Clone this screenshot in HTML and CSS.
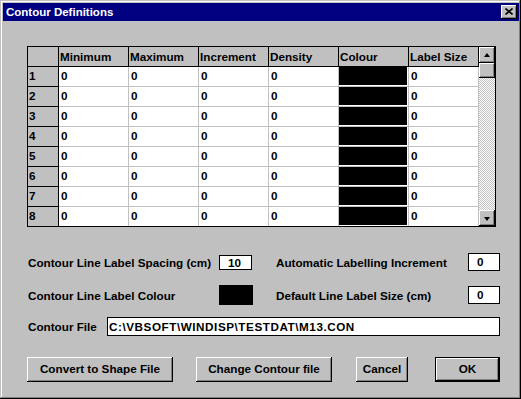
FILE: index.html
```html
<!DOCTYPE html>
<html lang="en">
<head>
    <meta charset="UTF-8">
    <title>Contour Definitions</title>
    <link rel="stylesheet" href="styles.css">
</head>
<body>
    <div class="win">
        <div class="title">
            <span>Contour Definitions</span>
            <div class="close">
                <svg width="8" height="7" viewBox="0 0 8 7"><path d="M0.5 0.5L7.5 6.5M7.5 0.5L0.5 6.5" stroke="#000" stroke-width="1.6" fill="none"/></svg>
            </div>
        </div>
        <div class="body">
            <div class="sheet">
                <div class="cells">
                    <div class="h"></div><div class="h">Minimum</div><div class="h">Maximum</div><div class="h">Increment</div><div class="h">Density</div><div class="h">Colour</div><div class="h">Label Size</div>
                    <div class="n">1</div><div class="c">0</div><div class="c">0</div><div class="c">0</div><div class="c">0</div><div class="c col"><i></i></div><div class="c">0</div>
                    <div class="n">2</div><div class="c">0</div><div class="c">0</div><div class="c">0</div><div class="c">0</div><div class="c col"><i></i></div><div class="c">0</div>
                    <div class="n">3</div><div class="c">0</div><div class="c">0</div><div class="c">0</div><div class="c">0</div><div class="c col"><i></i></div><div class="c">0</div>
                    <div class="n">4</div><div class="c">0</div><div class="c">0</div><div class="c">0</div><div class="c">0</div><div class="c col"><i></i></div><div class="c">0</div>
                    <div class="n">5</div><div class="c">0</div><div class="c">0</div><div class="c">0</div><div class="c">0</div><div class="c col"><i></i></div><div class="c">0</div>
                    <div class="n">6</div><div class="c">0</div><div class="c">0</div><div class="c">0</div><div class="c">0</div><div class="c col"><i></i></div><div class="c">0</div>
                    <div class="n">7</div><div class="c">0</div><div class="c">0</div><div class="c">0</div><div class="c">0</div><div class="c col"><i></i></div><div class="c">0</div>
                    <div class="n">8</div><div class="c">0</div><div class="c">0</div><div class="c">0</div><div class="c">0</div><div class="c col"><i></i></div><div class="c">0</div>
                </div>
                <div class="vscroll">
                    <div class="sbtn"><span class="up"></span></div>
                    <div class="thumb"></div>
                    <div class="track"></div>
                    <div class="sbtn"><span class="down"></span></div>
                </div>
            </div>

            <div class="opts">
                <div class="lbl">Contour Line Label Spacing (cm)</div>
                <div class="box small">10</div>
                <div class="lbl">Automatic Labelling Increment</div>
                <div class="box">0</div>
                <div class="lbl">Contour Line Label Colour</div>
                <div class="swatch"></div>
                <div class="lbl">Default Line Label Size (cm)</div>
                <div class="box">0</div>
            </div>

            <div class="file">
                <div class="lbl">Contour File</div>
                <div class="box path">C:\VBSOFT\WINDISP\TESTDAT\M13.CON</div>
            </div>

            <div class="btns">
                <div class="btn b-shape">Convert to Shape File</div>
                <div class="btn b-change">Change Contour file</div>
                <div class="btn b-cancel">Cancel</div>
                <div class="btn b-ok">OK</div>
            </div>
        </div>
    </div>
</body>
</html>
```

FILE: styles.css
```css
*{margin:0;padding:0;box-sizing:border-box;}
body{
    background:#c0c0c0;
    font-family:"Liberation Sans",Arial,sans-serif;
    font-size:11.7px;
    font-weight:bold;
    color:#000;
}
.win{
    width:521px;
    height:399px;
    padding:3px 2px 3px 3px;
    background:#c0c0c0;
    box-shadow: inset -1px -1px #000, inset 1px 1px #c0c0c0, inset -2px -2px #808080, inset 2px 2px #fff;
    display:flex;
    flex-direction:column;
}
.title{
    height:18px;
    background:#000080;
    color:#fff;
    font-size:11.5px;
    display:flex;
    align-items:center;
    justify-content:space-between;
    padding:0 2px 0 3px;
}
.close{
    width:16px;
    height:14px;
    background:#c0c0c0;
    box-shadow: inset -1px -1px #000, inset 1px 1px #fff, inset -2px -2px #808080;
    display:flex;
    align-items:center;
    justify-content:center;
    padding-bottom:1px;
}
.close svg{display:block;}
.body{
    padding:25px 0 0 24px;
    display:flex;
    flex-direction:column;
}

/* grid */
.sheet{
    display:flex;
    width:469px;
    border:1px solid #000;
}
.cells{
    display:grid;
    grid-template-columns:31px repeat(6,70px);
    grid-template-rows:repeat(8,20px) 19px;
}
.cells > div{
    line-height:17px;
    white-space:nowrap;
    overflow:hidden;
}
.cells > .h{line-height:19px;}
.cells > div:nth-last-child(-n+7){border-bottom:0;}
.h, .n{
    background:#c0c0c0;
    border-right:1px solid #000;
    border-bottom:1px solid #000;
    padding-left:1px;
}
.c{
    background:#fff;
    border-right:1px solid #c0c0c0;
    border-bottom:1px solid #c0c0c0;
    padding-left:2px;
}
.c.col{padding:0 1px 1px 0;}
.c.col i{display:block;height:100%;background:#000;}

.vscroll{
    width:16px;
    display:flex;
    flex-direction:column;
}
.sbtn, .thumb{
    height:16px;
    background:#c0c0c0;
    box-shadow: inset -1px -1px #000, inset 1px 1px #fff, inset -2px -2px #808080;
    display:flex;
    align-items:center;
    justify-content:center;
}
.thumb{height:15px;}
.track{
    flex:1;
    background:repeating-conic-gradient(#c0c0c0 0 25%, #fff 0 50%) 0 0/2px 2px;
}
.up, .down{
    width:0;
    height:0;
    border-left:3.5px solid transparent;
    border-right:3.5px solid transparent;
}
.up{border-bottom:4px solid #000;margin-bottom:1px;}
.down{border-top:4px solid #000;margin-bottom:-1px;}

/* options */
.opts{
    margin-top:25px;
    display:grid;
    grid-template-columns:192px 56px 193px 32px;
    grid-template-rows:20px 20px;
    row-gap:13px;
    align-items:center;
}
.lbl{padding-left:1px;white-space:nowrap;}
.box{
    background:#fff;
    border:1px solid #000;
    height:18px;
    line-height:16px;
    padding-left:8px;
}
.box.small{width:33px;height:15px;line-height:13px;}
.swatch{width:34px;height:20px;background:#000;}

.file{
    margin-top:12px;
    display:flex;
    align-items:center;
}
.file .lbl{width:80px;}
.box.path{
    width:393px;
    height:19px;
    line-height:17px;
    padding-left:1px;
    letter-spacing:0.55px;
}

/* buttons */
.btns{
    margin-top:21px;
    display:flex;
}
.btn{
    height:25px;
    line-height:24px;
    text-align:center;
    background:#c0c0c0;
    box-shadow: inset -1px -1px #000, inset 1px 1px #fff, inset -2px -2px #808080;
    white-space:nowrap;
}
.b-shape{width:146px;}
.b-change{width:136px;margin-left:23px;}
.b-cancel{width:52px;margin-left:24px;}
.b-ok{
    width:65px;
    margin-left:27px;
    border:1px solid #000;
    line-height:22px;
}
```
